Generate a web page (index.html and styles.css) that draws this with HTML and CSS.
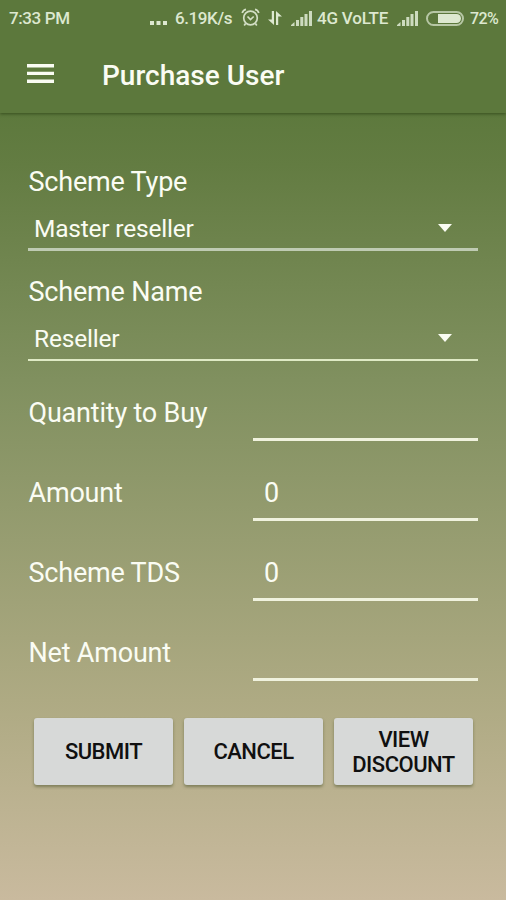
FILE: index.html
```html
<!DOCTYPE html>
<html lang="en">

<head>
    <meta charset="UTF-8">
    <meta name="viewport" content="width=device-width, initial-scale=1.0">
    <title>Purchase User</title>
    <link rel="stylesheet" href="styles.css">
</head>

<body>
    <header>
        <!-- Status bar -->
        <div class="status">
            <span class="time">7:33 PM</span>
            <svg class="dots" width="17" height="4" viewBox="0 0 17 4">
                <path d="M0 0h4v4H0zM6.5 0h4v4h-4zM13 0h4v4h-4z" />
            </svg>
            <span class="speed">6.19K/s</span>
            <svg class="alarm" width="19" height="19" viewBox="0 0 19 19">
                <circle cx="9.5" cy="10" r="6.8" />
                <path d="M1.2 5Q2 2 5 1.3M17.8 5Q17 2 14 1.3M6.5 8.5l3 3 3.2-3M4.6 15.5L3.2 17.5M14.4 15.5l1.4 2" />
            </svg>
            <svg class="arrows" width="14" height="14" viewBox="0 0 14 14">
                <path d="M3.8 0h2.2v14L0 8.5h3.8zM8 14V0L14 5.5h-3.8v8.5z" />
            </svg>
            <svg class="signal" width="21" height="15" viewBox="0 0 21 15">
                <path d="M0 15v-1l3.5-3v4zM5 9h3v6H5zM9.3 6h3v9h-3zM13.5 3h3v12h-3zM18 0h3v15h-3z" />
            </svg>
            <span class="network">4G VoLTE</span>
            <svg class="signal signal2" width="21" height="15" viewBox="0 0 21 15">
                <path d="M0 15v-1l3.5-3v4zM5 9h3v6H5zM9.3 6h3v9h-3zM13.5 3h3v12h-3zM18 0h3v15h-3z" />
            </svg>
            <svg class="battery" width="38" height="15" viewBox="0 0 38 15">
                <rect x="1" y="1" width="36" height="13" rx="6.5" />
                <path d="M12 3h18.5a4.5 4.5 0 0 1 0 9H12z" />
            </svg>
            <span class="percent">72%</span>
        </div>
        <div class="toolbar">
            <svg width="27" height="20" viewBox="0 0 27 20">
                <path d="M0 0h27v3.5H0zM0 7.7h27v3.4H0zM0 15.5h27V19H0z" />
            </svg>
            <h1>Purchase User</h1>
        </div>
    </header>

    <main>
        <label>Scheme Type</label>
        <div class="spinner">
            <span>Master reseller</span>
            <svg width="14" height="8" viewBox="0 0 14 8"><path d="M0 0h14L7 8z" /></svg>
        </div>
        <label>Scheme Name</label>
        <div class="spinner second">
            <span>Reseller</span>
            <svg width="14" height="8" viewBox="0 0 14 8"><path d="M0 0h14L7 8z" /></svg>
        </div>

        <div class="row">
            <label>Quantity to Buy</label>
            <div class="field"></div>
        </div>
        <div class="row">
            <label>Amount</label>
            <div class="field">0</div>
        </div>
        <div class="row">
            <label>Scheme TDS</label>
            <div class="field">0</div>
        </div>
        <div class="row">
            <label>Net Amount</label>
            <div class="field"></div>
        </div>

        <div class="buttons">
            <button>SUBMIT</button>
            <button>CANCEL</button>
            <button>VIEW DISCOUNT</button>
        </div>
    </main>
</body>

</html>
```
FILE: styles.css
```css
* {
    box-sizing: border-box;
}

body {
    margin: 0;
    height: 900px;
    font-family: Roboto, sans-serif;
    color: #fafcf3;
    background: linear-gradient(#5d793d 113px, #637c42 165px, #80905f 380px, #aeaa83 700px, #c9ba9e 900px);
}

header {
    height: 113px;
    background: #5c783c;
    box-shadow: 0 1px 3px rgba(30, 50, 10, 0.6);
}

.status {
    display: flex;
    align-items: center;
    height: 36px;
    padding: 0 8px 0 9px;
    font-size: 17px;
    font-weight: 500;
    letter-spacing: -0.4px;
    color: #dde8d0;
    fill: #dde8d0;
    white-space: nowrap;
}

.dots {
    margin: 9px 8px 0 auto;
}

.speed {
    width: 57px;
}

.alarm {
    margin: -2px 8px 0 9px;
    fill: none;
    stroke: #d3dfc5;
    stroke-width: 1.7;
}

.arrows {
    margin-right: 9px;
}

.signal {
    margin-right: 5px;
    fill: #cddbbf;
}

.network {
    width: 71px;
    letter-spacing: -0.2px;
}

.signal2 {
    margin: 0 8px 0 9px;
}

.battery {
    margin-right: 6px;
}

.battery rect {
    fill: none;
    stroke: #b7c7a5;
    stroke-width: 2;
}

.percent {
    font-size: 16px;
    letter-spacing: -0.6px;
    width: 28px;
}

.toolbar {
    display: flex;
    align-items: center;
    height: 77px;
    padding: 0 0 2px 27px;
    fill: #fafcf3;
}

h1 {
    margin: 4px 0 0 48px;
    font-size: 28px;
    font-weight: 500;
    line-height: 32px;
}

main {
    padding: 53px 28px 0;
}

label {
    display: block;
    padding-left: 0.5px;
    font-size: 27px;
    letter-spacing: -0.2px;
    line-height: 32px;
}

.spinner {
    display: flex;
    justify-content: space-between;
    height: 53px;
    padding: 15px 26px 0 6px;
    margin-bottom: 25px;
    font-size: 24.5px;
    letter-spacing: -0.2px;
    line-height: 32px;
    border-bottom: 3px solid #bfcbb3;
}

.spinner svg {
    margin-top: 11px;
    fill: #fafcf3;
}

.spinner.second {
    margin-bottom: 0;
    border-bottom: 2px solid #dfeac5;
}

.row {
    display: flex;
    justify-content: space-between;
    align-items: flex-end;
    height: 80px;
}

.row label {
    padding-bottom: 12px;
    height: 44px;
}

.field {
    width: 225px;
    height: 44px;
    padding-left: 11px;
    font-size: 27px;
    line-height: 32px;
    border-bottom: 3px solid #f0f2de;
}

.buttons {
    display: flex;
    gap: 11px;
    padding: 37px 5px 0 6px;
}

button {
    flex: 1;
    height: 67px;
    padding: 0 10px;
    font-family: Roboto, sans-serif;
    font-size: 22px;
    font-weight: 500;
    letter-spacing: -0.5px;
    line-height: 25px;
    color: #101010;
    background: #d7d9d8;
    border: none;
    border-radius: 3px;
    box-shadow: 0 2px 3px rgba(70, 80, 40, 0.5);
}
```
